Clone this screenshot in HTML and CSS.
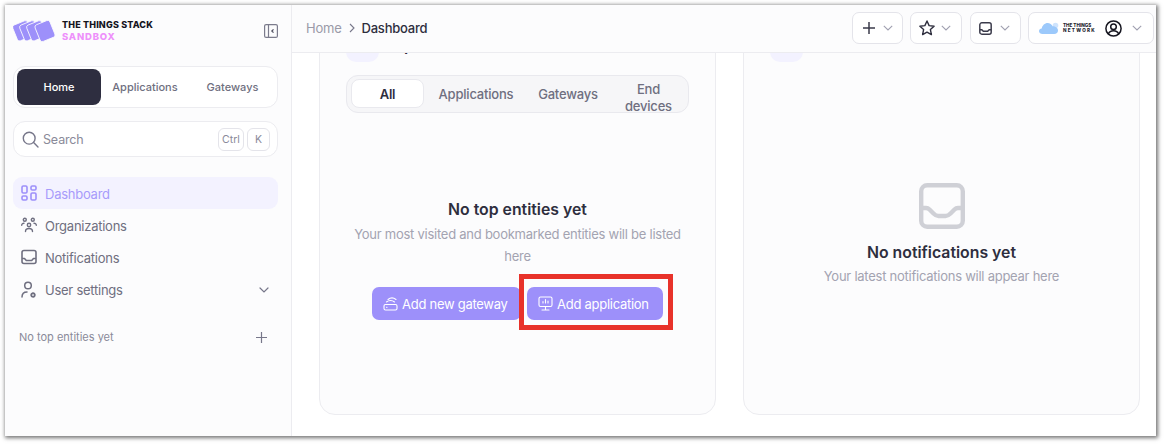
FILE: index.html
```html
<!DOCTYPE html>
<html lang="en">
<head>
<meta charset="utf-8">
<title>Dashboard</title>
<link rel="stylesheet" href="styles.css">
</head>
<body>
<div class="window">
  <aside class="sidebar">
    <div class="brand">
      <svg class="brand-mark" width="44" height="24" viewBox="0 0 44 24">
        <g fill="#9d90fa" stroke="#fcfcfd" stroke-width="0.8">
          <rect x="1.500" y="3.500" width="16" height="17" rx="2.5" transform="rotate(-22 9 12)"/>
          <rect x="8.500" y="3.500" width="16" height="17" rx="2.5" transform="rotate(-22 16 12)"/>
          <rect x="15.500" y="3.500" width="16" height="17" rx="2.5" transform="rotate(-22 23 12)"/>
          <rect x="24" y="3" width="16" height="18" rx="2.5" transform="rotate(-22 32 12)"/>
        </g>
      </svg>
      <div class="brand-text">
        <span class="brand-name">THE THINGS STACK</span>
        <span class="brand-sub">SANDBOX</span>
      </div>
      <svg class="collapse" width="14" height="14" viewBox="0 0 14 14" fill="none" stroke="#7b7b8c" stroke-width="1.2">
        <rect x="0.6" y="0.6" width="12.8" height="12.8" rx="1.5"/>
        <path d="M4.5 1v12"/>
        <path d="M9.5 5.3 7.8 7l1.7 1.7" stroke="#4b4b5c"/>
      </svg>
    </div>
    <div class="seg">
      <span class="seg-item seg-active">Home</span>
      <span class="seg-item">Applications</span>
      <span class="seg-item">Gateways</span>
    </div>
    <div class="search">
      <svg width="17" height="17" viewBox="0 0 17 17" fill="none" stroke="#77778a" stroke-width="1.4" stroke-linecap="round">
        <circle cx="7.2" cy="7.2" r="5.9"/><path d="m11.6 11.6 4.4 4.4"/>
      </svg>
      <span class="search-label">Search</span>
      <span class="key">Ctrl</span>
      <span class="key key-k">K</span>
    </div>
    <nav class="nav">
      <div class="nav-item nav-active">
        <svg width="16" height="16" viewBox="0 0 16 16" fill="none" stroke="#9d90fa" stroke-width="1.6">
          <rect x="1" y="1" width="5" height="7" rx="1.2"/><rect x="1" y="11" width="5" height="4" rx="1.2"/><rect x="10" y="1" width="5" height="4" rx="1.2"/><rect x="10" y="8" width="5" height="7" rx="1.2"/>
        </svg>
        <span class="nav-text">Dashboard</span>
      </div>
      <div class="nav-item">
        <svg width="16" height="16" viewBox="0 0 16 16" fill="none" stroke="#6f6f80" stroke-width="1.4" stroke-linecap="round">
          <circle cx="3.8" cy="2.8" r="1.5"/><circle cx="11.8" cy="2.8" r="1.5"/><circle cx="8" cy="8" r="1.7"/>
          <path d="M.7 8.3c0-1.4 1-2 2.3-2M15.3 8.3c0-1.4-1-2-2.3-2M4.5 14.500c0-2 1.500-3 3.500-3s3.500 1 3.500 3"/>
        </svg>
        <span class="nav-text">Organizations</span>
      </div>
      <div class="nav-item">
        <svg width="16" height="16" viewBox="0 0 16 16" fill="none" stroke="#6f6f80" stroke-width="1.6" stroke-linejoin="round">
          <rect x="1" y="1.500" width="14" height="13" rx="2"/>
          <path d="M1 9.500h2.500l1.800 2h5.400l1.800-2H15"/>
        </svg>
        <span class="nav-text">Notifications</span>
      </div>
      <div class="nav-item">
        <svg class="nav-lower" width="16" height="18" viewBox="0 0 16 18" fill="none" stroke="#6f6f80" stroke-width="1.5" stroke-linecap="round">
          <circle cx="7" cy="4.500" r="3.300"/>
          <path d="M1 16c0-3 1.500-5 5-5"/>
          <circle cx="12" cy="14" r="1.800" stroke-width="1.800" stroke-dasharray="1.500 .4"/>
        </svg>
        <span class="nav-text nav-grow">User settings</span>
        <svg class="nav-lower" width="10" height="6" viewBox="0 0 10 6" fill="none" stroke="#77778a" stroke-width="1.200" stroke-linecap="round"><path d="m1 1 4 4 4-4"/></svg>
      </div>
    </nav>
    <div class="top-row">
      <span class="top-label">No top entities yet</span>
      <svg width="11" height="11" viewBox="0 0 11 11" stroke="#77778a" stroke-width="1.200"><path d="M5.500 0v11M0 5.500h11"/></svg>
    </div>
  </aside>
  <div class="main">
    <header class="topbar">
      <div class="crumbs">
        <span class="crumb">Home</span>
        <svg width="6" height="10" viewBox="0 0 6 10" fill="none" stroke="#77778a" stroke-width="1.100"><path d="m1 1 4 4-4 4"/></svg>
        <span class="crumb-now">Dashboard</span>
      </div>
      <div class="actions">
        <div class="act act-plus">
          <svg width="12" height="12" viewBox="0 0 12 12" stroke="#3a3a4a" stroke-width="1.500"><path d="M6 0v12M0 6h12"/></svg>
          <svg width="10" height="6" viewBox="0 0 10 6" fill="none" stroke="#a0a0b0" stroke-width="1.100"><path d="m.8.800 4.200 4.200 4.200-4.200"/></svg>
        </div>
        <div class="act act-star">
          <svg width="16" height="16" viewBox="0 0 16 16" fill="none" stroke="#2e2e3e" stroke-width="1.400" stroke-linejoin="round"><path d="m8 1 2.100 4.600 5 .6-3.700 3.400 1 5L8 12.100 3.600 14.600l1-5L.9 6.200l5-.6z"/></svg>
          <svg width="10" height="6" viewBox="0 0 10 6" fill="none" stroke="#a0a0b0" stroke-width="1.100"><path d="m.8.800 4.200 4.200 4.200-4.200"/></svg>
        </div>
        <div class="act act-inbox">
          <svg width="13" height="13" viewBox="0 0 16 16" fill="none" stroke="#3a3a4a" stroke-width="1.800" stroke-linejoin="round"><rect x="1" y="1" width="14" height="14" rx="2.500"/><path d="M1 9.500h2.500l1.800 2h5.400l1.800-2H15"/></svg>
          <svg width="10" height="6" viewBox="0 0 10 6" fill="none" stroke="#a0a0b0" stroke-width="1.100"><path d="m.8.800 4.200 4.200 4.200-4.200"/></svg>
        </div>
        <div class="act act-user">
          <svg width="21" height="12" viewBox="0 0 21 12"><circle cx="16.500" cy="3.500" r="2.800" fill="#cfe4fd"/><path fill="#9cc9fb" d="M3.500 12C1.500 12 0 10.800 0 9.200c0-1.500 1.200-2.500 2.700-2.600C3.300 3.300 5.800 1 8.600 1c2.300 0 4.200 1.300 5 3.200 3 0 5.400 1.800 5.400 4.200 0 2-1.500 3.600-3.800 3.600z"/></svg>
          <span class="ttn"><span>THE THINGS</span><span class="ttn-2">NETWORK</span></span>
          <svg class="avatar" width="17" height="17" viewBox="0 0 17 17" fill="none" stroke="#15151f" stroke-width="1.500"><circle cx="8.500" cy="8.500" r="7.600"/><circle cx="8.500" cy="6.800" r="2.800"/><path d="M3.300 14c.8-2 2.900-3.300 5.200-3.300s4.400 1.300 5.200 3.300"/></svg>
          <svg class="user-chev" width="10" height="6" viewBox="0 0 10 6" fill="none" stroke="#a0a0b0" stroke-width="1.100"><path d="m.8.800 4.200 4.200 4.200-4.200"/></svg>
        </div>
      </div>
    </header>
    <div class="content">
      <div class="cards">
        <section class="card">
          <div class="card-head">
            <span class="head-icon">
              <svg width="33" height="33" viewBox="0 0 33 33" fill="none" stroke="#c9c3fc" stroke-width="1.500"><path d="M12 21.500v2M19 21.500v2"/></svg>
            </span>
            <span class="card-title">Top entities</span>
          </div>
          <div class="tabs">
            <span class="tab tab-active">All</span>
            <span class="tab tab-apps">Applications</span>
            <span class="tab tab-gw">Gateways</span>
            <span class="tab tab-end">End devices</span>
          </div>
          <div class="empty empty-top">
            <h2 class="empty-title">No top entities yet</h2>
            <p class="empty-text">Your most visited and bookmarked entities will be listed here</p>
            <div class="btns">
              <span class="btn btn-gw">
                <svg width="15" height="15" viewBox="0 0 15 15" fill="none" stroke="#fff" stroke-width="1.100" stroke-linecap="round"><rect x="1" y="8.500" width="13" height="5.500" rx="1.500"/><path d="M3.500 6c2.200-2 5.800-2 8 0M5 3.500C7.500 1.500 10.500 1.500 13 3.500"/><path d="M3.500 11.200h.5"/></svg>
                Add new gateway
              </span>
              <span class="btn btn-app">
                <svg width="15" height="15" viewBox="0 0 15 15" fill="none" stroke="#fff" stroke-width="1.100" stroke-linecap="round"><rect x="1" y="1" width="13" height="9.500" rx="1.500"/><path d="M7.500 10.500v3M4 14h7M5 7V5.500M7.500 7V3.500M10 7V5"/></svg>
                Add application
                <span class="mark"></span>
              </span>
            </div>
          </div>
        </section>
        <section class="card">
          <div class="card-head">
            <span class="head-icon"></span>
          </div>
          <div class="empty empty-notes">
            <svg width="46" height="46" viewBox="0 0 46 46" fill="none" stroke="#cfd0d6" stroke-width="4.400" stroke-linejoin="round"><rect x="2.200" y="2.200" width="41.600" height="41.600" rx="6"/><path d="M2 25h5c1.500 0 2.500.5 3.500 1.500l4 4c1.500 1.500 3 2.500 5 2.500h7c2 0 3.500-1 5-2.500l4-4c1-1 2-1.500 3.500-1.500h5"/></svg>
            <h2 class="empty-title notes-title">No notifications yet</h2>
            <p class="empty-text notes-text">Your latest notifications will appear here</p>
          </div>
        </section>
      </div>
    </div>
  </div>
</div>
</body>
</html>
```

FILE: styles.css
```css
* { box-sizing: border-box; }
html, body { margin: 0; height: 100%; }
body {
  background: #fff;
  font-family: "Inter", "Noto Sans", sans-serif;
  color: #2e2e3e;
  overflow: hidden;
}
.window {
  margin: 5px 0 0 5px;
  width: 1151px;
  height: 431px;
  display: flex;
  background: #fff;
  box-shadow: 1px 1px 4px 1px rgba(0,0,0,.55);
  overflow: hidden;
}
.sidebar {
  width: 287px;
  flex: none;
  background: #fcfcfd;
  border-right: 1px solid #ececf0;
  padding: 15px 13px 0 8px;
  display: flex;
  flex-direction: column;
}
.brand { display: flex; align-items: center; height: 22px; margin-bottom: 24px; }
.brand-mark { flex: none; margin: 0 5px 0 0; }
.brand-text { display: flex; flex-direction: column; flex: 1; line-height: 12px; }
.brand-name { font-size: 9px; font-weight: 800; color: #15151f; letter-spacing: .17px; }
.brand-sub { font-size: 9.5px; font-weight: 800; color: #ee90fb; letter-spacing: .8px; }
.seg {
  height: 42px;
  border: 1px solid #ececf0;
  border-radius: 12px;
  background: #fff;
  padding: 2px 3px;
  display: grid;
  grid-template-columns: 84px 88px 87px;
  align-items: stretch;
  margin-bottom: 13px;
}
.seg-item { display: flex; align-items: center; justify-content: center; font-size: 11px; font-weight: 500; color: #6f6f80; }
.seg-active { background: #2e2e40; color: #fff; border-radius: 8px; }
.search {
  height: 36px;
  border: 1px solid #ececf0;
  border-radius: 12px;
  background: #fff;
  display: flex;
  align-items: center;
  padding: 0 7px 0 8px;
  margin-bottom: 20px;
}
.search-label { flex: 1; font-size: 12.5px; letter-spacing: -.15px; color: #8a8a99; margin-left: 4px; }
.key {
  height: 23px;
  padding: 0 2px;
  border: 1px solid #e4e4ea;
  border-radius: 6px;
  font-size: 10.5px;
  color: #8a8a99;
  display: flex;
  align-items: center;
  justify-content: center;
  width: 26px;
}
.key-k { margin-left: 3px; width: 23px; }
.nav { display: flex; flex-direction: column; margin-bottom: 25px; }
.nav-item {
  height: 32px;
  display: flex;
  align-items: center;
  gap: 8px;
  padding: 0 9px 0 8px;
  font-size: 13px;
  letter-spacing: -.25px;
  color: #6f6f80;
  border-radius: 9px;
}
.nav-text { padding-top: 2px; }
.nav-lower { margin-top: 2px; }
.nav-active { background: #f3f2ff; color: #a79bfb; }
.nav-grow { flex: 1; }
.top-row { display: flex; align-items: center; justify-content: space-between; padding: 0 11px 0 6px; }
.top-label { font-size: 11px; color: #8a8a99; }
.main { flex: 1; min-width: 0; display: flex; flex-direction: column; }
.topbar {
  height: 48px;
  flex: none;
  background: #fcfcfd;
  border-bottom: 1px solid #ececf0;
  display: flex;
  align-items: center;
  justify-content: space-between;
  padding: 0 2px 1px 14px;
  position: relative;
  z-index: 1;
}
.crumbs { display: flex; align-items: center; gap: 7px; font-size: 13px; letter-spacing: -.22px; }
.crumb { color: #9a9aa8; }
.crumb-now { color: #2e2e3e; font-weight: 500; }
.actions { display: flex; gap: 7.3px; }
.act {
  height: 32px;
  border: 1px solid #e4e4ea;
  border-radius: 7px;
  background: #fff;
  display: flex;
  align-items: center;
}
.act-plus { width: 51px; padding-left: 10px; gap: 8px; }
.act-star { width: 52px; padding-left: 8px; gap: 6px; }
.act-inbox { width: 51px; padding-left: 8px; gap: 8px; }
.act-user { width: 126px; padding-left: 10px; }
.ttn { width: 33px; display: flex; flex-direction: column; margin-left: 3px; font-size: 4.6px; line-height: 5.5px; font-weight: 800; color: #25252f; white-space: nowrap; }
.ttn-2 { letter-spacing: 1.25px; }
.avatar { margin-left: 9px; }
.user-chev { margin-left: 10px; }
.content { flex: 1; min-height: 0; overflow: hidden; padding: 0 16px 0 27px; }
.cards {
  display: grid;
  grid-template-columns: 397px 397px;
  gap: 27px;
  height: 413px;
  margin-top: -51px;
}
.card {
  border: 1px solid #ececf0;
  border-radius: 16px;
  background: #fcfcfd;
  padding: 26px 26px 0;
}
.card-head { display: flex; align-items: center; height: 32px; margin-bottom: 14px; }
.head-icon { width: 33px; height: 33px; border-radius: 10px; background: #f3f2ff; flex: none; }
.card-title { margin-left: 6px; font-size: 16px; font-weight: 600; color: #2e2e3e; }
.tabs {
  width: 343px;
  height: 38px;
  border: 1px solid #e9e9ee;
  border-radius: 12px;
  background: #f6f6f8;
  padding: 3px 4px;
  display: grid;
  grid-template-columns: 73px 104px 80px 1fr;
  grid-template-rows: 29px;
}
.tab { display: flex; align-items: center; justify-content: center; text-align: center; padding-top: 2px; font-size: 13px; line-height: 17px; letter-spacing: -.2px; font-weight: 500; color: #6f6f80; }
.tab-active { background: #fff; color: #2e2e3e; border: 1px solid #e9e9ee; border-radius: 8px; font-weight: 600; }
.tab-end { height: 36px; padding: 1px 14px 0 17px; }
.empty { display: flex; flex-direction: column; align-items: center; text-align: center; }
.empty-top { margin-top: 87px; }
.empty-title { margin: 0; font-size: 15.8px; line-height: 20px; font-weight: 600; color: #2e2e3e; }
.empty-text { margin: 3px 0 0; font-size: 13px; line-height: 22px; letter-spacing: -.25px; color: #a3a3b1; }
.btns { display: flex; gap: 6px; margin-top: 20px; }
.btn {
  height: 33px;
  border-radius: 7px;
  background: #9d90fa;
  color: #fff;
  font-size: 13px;
  letter-spacing: -.27px;
  display: flex;
  align-items: center;
  gap: 4px;
  position: relative;
}
.btn-gw { width: 149px; padding-left: 11px; }
.btn-app { width: 136px; padding-left: 11px; }
.mark {
  position: absolute;
  top: -13px;
  bottom: -10px;
  left: -8px;
  right: -10px;
  border: 5px solid #e8322a;
}
.empty-notes { margin-top: 122px; }
.notes-title { margin-top: 14px; }
.notes-text { margin-top: 2px; }
```
